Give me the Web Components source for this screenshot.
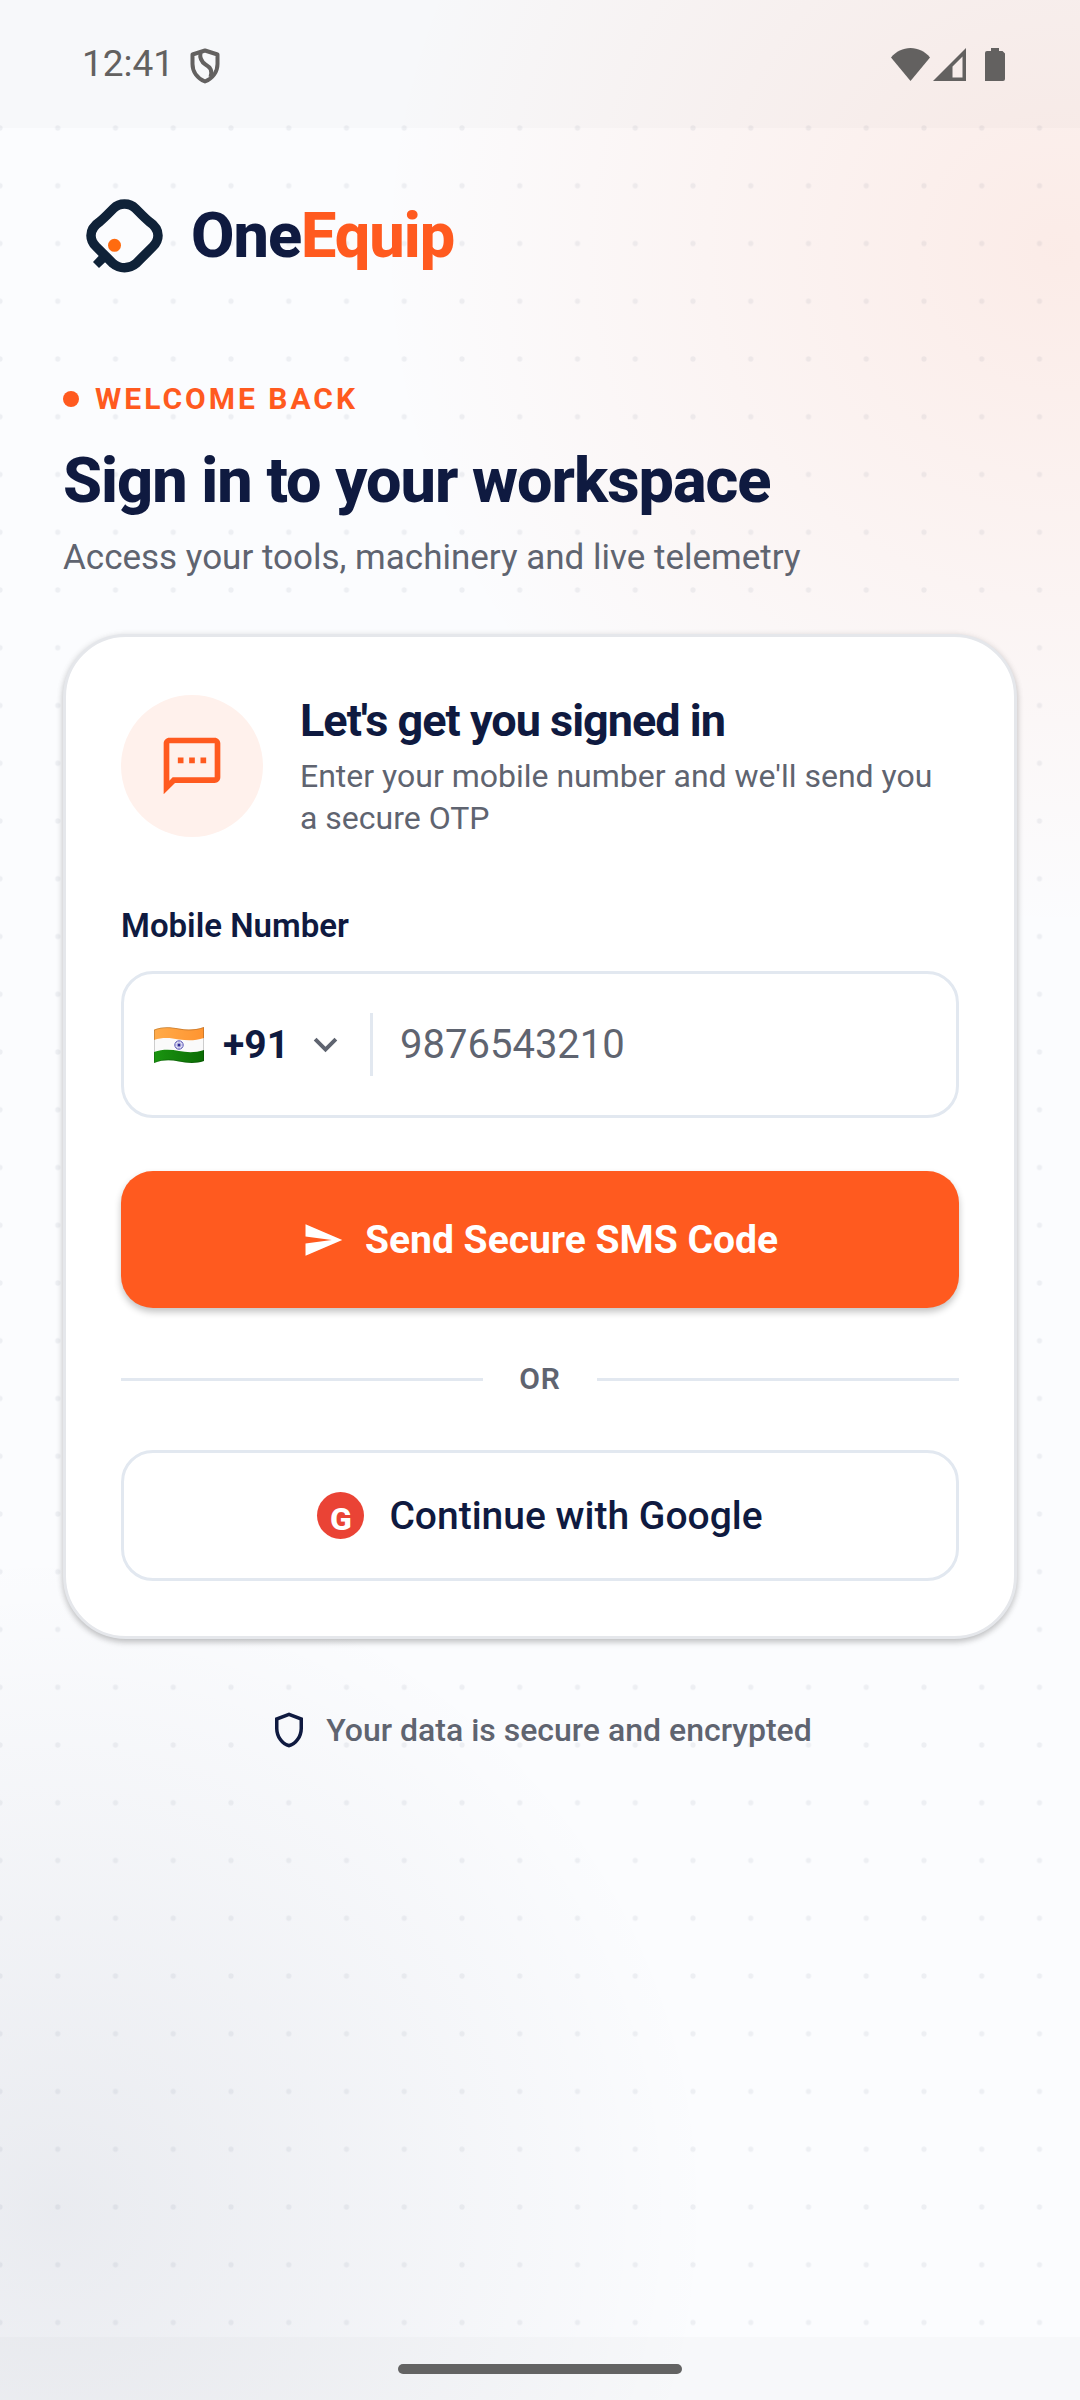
<!DOCTYPE html>
<html lang="en">
<head>
<meta charset="utf-8">
<meta name="viewport" content="width=device-width, initial-scale=1">
<title>OneEquip - Sign in</title>
<style>
    body{
        margin: 0;
        font-family: Roboto, "Noto Sans", sans-serif;
        color: #0f1a40;
        --navy: #0f1a40;
        --orange: #ff5a1f;
        --grey: #5f6470;
        --line: #e2e8f0;
        --radius: 32px;
    }
</style>
</head>
<body>
<app-screen>
    <status-bar slot="top" time="12:41"></status-bar>
    <brand-logo></brand-logo>
    <page-heading eyebrow="WELCOME BACK">
        Sign in to your workspace
        <span slot="subtitle">Access your tools, machinery and live telemetry</span>
    </page-heading>
    <sign-in-card>
        <card-header slot="header">
            Let's get you signed in
            <span slot="text">Enter your mobile number and we'll send you a secure OTP</span>
        </card-header>
        <phone-field label="Mobile Number" placeholder="9876543210"></phone-field>
        <send-button>Send Secure SMS Code</send-button>
        <or-divider>OR</or-divider>
        <google-button>Continue with Google</google-button>
    </sign-in-card>
    <secure-note>Your data is secure and encrypted</secure-note>
    <nav-bar slot="bottom"></nav-bar>
</app-screen>

<script>
//Base class : puts the style and the markup in the shadow root
class BaseElement extends HTMLElement{
    html = ``
    css = ``

    constructor() {
        super();
        this.attachShadow({ mode: "open" });
    }

    connectedCallback() {
        this.shadowRoot.innerHTML = `<style>*{box-sizing:border-box} ${this.css}</style>` + this.html;
        this.ready();
    }

    ready() {}
}

//Full page : glows, dot grid, system bars and content
class AppScreen extends BaseElement{
    html = `<svg class="dots" aria-hidden="true">
                <defs>
                    <pattern id="dot" x="-11" y="-11" width="22" height="22" patternUnits="userSpaceOnUse" patternTransform="scale(2.625)">
                        <circle cx="11" cy="11" r="1" fill="#0f1a40" fill-opacity=".06"/>
                    </pattern>
                </defs>
                <rect y="-6" width="100%" height="100%" fill="url(#dot)"/>
            </svg>
            <slot name="top"></slot>
            <main><slot></slot></main>
            <slot name="bottom"></slot>`

    css = `
    :host{
        display: flex;
        flex-direction: column;
        min-height: 100vh;
        position: relative;
        overflow: hidden;
        background:
            radial-gradient(circle 680px at 98% 250px, rgba(255, 90, 31, .1), rgba(255, 90, 31, 0)),
            radial-gradient(circle 660px at 5% calc(100% - 190px), rgba(15, 26, 64, .075), rgba(15, 26, 64, 0)),
            #fbfcfe;
    }
    .dots{
        position: absolute;
        top: 128px;
        left: 0;
        width: 100%;
        height: calc(100% - 191px);
        overflow: visible;
    }
    main{
        flex: 1;
        position: relative;
        display: flex;
        flex-direction: column;
        padding: 68px 63px;
    }`
}

class StatusBar extends BaseElement{
    html = `<span class="time"></span>
            <svg class="shield" width="30" height="36" viewBox="0 0 30 36" fill="none" stroke="currentColor" stroke-width="4" stroke-linejoin="round">
                <path d="M15 2.500L27.500 6.500V16C27.500 24 22.500 30.500 15 33.500C7.500 30.500 2.500 24 2.500 16V6.500Z"/>
                <path d="M10.500 4.500C9.500 10 11 13.500 15.500 16.500C20.500 19.500 22.500 22 20.500 29"/>
            </svg>
            <span class="icons">
                <svg width="39" height="33" viewBox="0 0 39 33" fill="currentColor"><path d="M0 9.500C5 3.500 12 0 19.500 0S34 3.500 39 9.500L19.500 33Z"/></svg>
                <svg width="33" height="33" viewBox="0 0 33 33" fill="currentColor"><path fill-rule="evenodd" d="M33 0V33H0ZM29.500 8.500L19.500 18.500V29.500H29.500Z"/></svg>
                <svg class="battery" width="20" height="33" viewBox="0 0 20 33" fill="currentColor"><path d="M6 0H14V3H17.500L20 5.500V31Q20 33 18 33H0V5Q0 3 2 3H6Z"/></svg>
            </span>`

    css = `
    :host{
        display: flex;
        align-items: center;
        height: 128px;
        padding: 0 75px 0 82px;
        background: rgba(0, 0, 0, .014);
        color: #636160;
        font-size: 37px;
        line-height: 42px;
    }
    .icons{
        display: flex;
        align-items: center;
        gap: 3px;
        margin-left: auto;
    }
    svg{
        display: block;
    }
    .shield{
        margin: 3px 0 0 16px;
    }
    .battery{
        margin-left: 16px;
    }`

    ready() {
        this.shadowRoot.querySelector(".time").textContent = this.getAttribute("time");
    }
}

class BrandLogo extends BaseElement{
    html = `<svg width="80" height="80" viewBox="84 196 80 80" aria-hidden="true">
                <path d="M124.500 204C129 204 132.500 205.500 135.500 208.500L142 215Q145 218 149 221.500C155 225.500 158 230 158 235.500C158 240 156 243.500 153 246.500L136 263.500C129.500 269.200 119.500 269.200 113 263.500L96 246.500C93 243.500 91 240 91 235.500C91 230 94 225.500 100 221.500Q104 218 107 215L113.500 208.500C116.500 205.500 120 204 124.500 204Z" fill="none" stroke="#0f2238" stroke-width="9.500"/>
                <path d="M100 254.500L93 262L99 268L107 260.500Z" fill="#0f2238"/>
                <circle cx="114.500" cy="245.300" r="6.500" fill="#ff6b0f"/>
            </svg>
            <span>One<b>Equip</b></span>`

    css = `
    :host{
        display: flex;
        align-items: center;
        gap: 27px;
        padding-left: 21px;
        font-size: 63px;
        line-height: 74px;
        font-weight: 800;
        letter-spacing: -1px;
    }
    b{
        font-weight: inherit;
        color: var(--orange);
    }`
}

class PageHeading extends BaseElement{
    html = `<p class="eyebrow"></p>
            <h1><slot></slot></h1>
            <p class="subtitle"><slot name="subtitle"></slot></p>`

    css = `
    :host{
        display: block;
        margin-top: 102px;
    }
    p, h1{
        margin: 0;
    }
    .eyebrow{
        display: flex;
        align-items: center;
        gap: 16px;
        font-size: 30px;
        line-height: 42px;
        font-weight: 700;
        letter-spacing: 3px;
        color: var(--orange);
    }
    .eyebrow::before{
        content: '';
        width: 16px;
        height: 16px;
        border-radius: 50%;
        background: currentColor;
    }
    h1{
        margin-top: 24px;
        font-size: 63px;
        line-height: 74px;
        font-weight: 800;
        letter-spacing: -1px;
    }
    .subtitle{
        margin-top: 19px;
        font-size: 35px;
        line-height: 42px;
        color: var(--grey);
    }`

    ready() {
        this.shadowRoot.querySelector(".eyebrow").textContent = this.getAttribute("eyebrow");
    }
}

class SignInCard extends BaseElement{
    html = `<slot name="header"></slot><form><slot></slot></form>`

    css = `
    :host{
        display: block;
        margin-top: 55px;
        padding: 55px;
        background: #fff;
        border: 3px solid #e5e7eb;
        border-radius: 63px;
        box-shadow: 0 3px 6px rgba(0, 0, 0, .22), 0 1px 9px rgba(0, 0, 0, .06);
    }
    form{
        display: flex;
        flex-direction: column;
        margin-top: 66px;
    }`
}

class CardHeader extends BaseElement{
    html = `<div class="icon">
                <svg width="68" height="68" viewBox="0 0 24 24" fill="currentColor" aria-hidden="true"><path d="M20 2H4c-1.100 0-2 .9-2 2v18l4-4h14c1.100 0 2-.9 2-2V4c0-1.100-.9-2-2-2zm0 14H5.170L4 17.170V4h16v12zM7 9h2v2H7V9zm4 0h2v2h-2V9zm4 0h2v2h-2V9z"/></svg>
            </div>
            <div>
                <h2><slot></slot></h2>
                <p><slot name="text"></slot></p>
            </div>`

    css = `
    :host{
        display: flex;
        align-items: center;
        gap: 37px;
        padding-right: 10px;
    }
    .icon{
        flex: none;
        display: flex;
        align-items: center;
        justify-content: center;
        width: 142px;
        height: 142px;
        border-radius: 50%;
        background: #fff1ec;
        color: var(--orange);
    }
    h2{
        margin: 0;
        font-size: 45px;
        line-height: 58px;
        font-weight: 700;
        letter-spacing: -1px;
    }
    p{
        margin: 5px 0 0;
        font-size: 32px;
        line-height: 42px;
        color: var(--grey);
    }`
}

class PhoneField extends BaseElement{
    html = `<label for="phone"></label>
            <div class="box">
                <svg width="50" height="36" viewBox="0 0 50 36" aria-hidden="true">
                    <defs>
                        <clipPath id="cloth"><path d="M0 2.500C9 -1 17 0 25 1.500C33 3 41 3 50 0V34C41 37 33 36 25 34.500C17 33 9 32.500 0 36Z"/></clipPath>
                        <linearGradient id="saffron"><stop stop-color="#ffab4a"/><stop offset="1" stop-color="#ff9430"/></linearGradient>
                        <linearGradient id="green"><stop stop-color="#1a9510"/><stop offset="1" stop-color="#0b6c05"/></linearGradient>
                    </defs>
                    <g clip-path="url(#cloth)">
                        <rect width="50" height="36" fill="#fafafa"/>
                        <path d="M0 -4H50V11C41 14 33 13.500 25 12.500C17 11 9 10 0 13Z" fill="url(#saffron)"/>
                        <path d="M0 25C9 22 17 22.500 25 24C33 25.500 41 26 50 23V40H0Z" fill="url(#green)"/>
                        <circle cx="25" cy="18" r="4.200" fill="#e4e4f5" stroke="#5a55b5"/>
                        <path d="M25 14V22M21 18H29M22.200 15.200L27.800 20.800M27.800 15.200L22.200 20.800" stroke="#8a87cc" stroke-width=".5"/>
                        <circle cx="25" cy="18" r="1.500" fill="#2f2a94"/>
                    </g>
                    <path d="M.5 3C9 -.5 17 .5 25 2C33 3.500 41 3.500 49.500 .5V33.500C41 36.500 33 35.500 25 34C17 32.500 9 32 .5 35.500Z" fill="none" stroke="#000" stroke-opacity=".18"/>
                </svg>
                <span class="code">
                    <select aria-label="Country code"><option>+91</option></select>
                    <svg width="47" height="47" viewBox="0 0 24 24" fill="currentColor" aria-hidden="true"><path d="M7.410 8.590L12 13.170l4.590-4.580L18 10l-6 6-6-6z"/></svg>
                </span>
                <input id="phone" type="tel">
            </div>`

    css = `
    label{
        display: block;
        font-size: 33px;
        line-height: 42px;
        font-weight: 600;
    }
    .box{
        display: flex;
        align-items: center;
        height: 147px;
        margin-top: 24px;
        padding: 0 30px;
        border: 3px solid var(--line);
        border-radius: var(--radius);
    }
    .code{
        display: flex;
        align-items: center;
        gap: 12px;
        height: 63px;
        margin-left: 19px;
        padding-right: 21px;
        border-right: 3px solid var(--line);
        color: var(--grey);
    }
    select{
        appearance: none;
        border: none;
        padding: 0;
        background: none;
        font: 700 39px/48px Roboto, sans-serif;
        color: var(--navy);
    }
    input{
        flex: 1;
        min-width: 0;
        border: none;
        padding: 0 0 0 27px;
        background: none;
        font: 400 40px/48px Roboto, sans-serif;
        color: var(--navy);
        outline: none;
    }
    input::placeholder{
        color: var(--grey);
        opacity: 1;
    }`

    ready() {
        this.shadowRoot.querySelector("label").textContent = this.getAttribute("label");
        this.shadowRoot.querySelector("input").placeholder = this.getAttribute("placeholder");
    }
}

class SendButton extends BaseElement{
    html = `<button type="button">
                <svg width="42" height="42" viewBox="0 0 24 24" fill="currentColor" aria-hidden="true"><path d="M2.010 21L23 12 2.010 3 2 10l15 2-15 2z"/></svg>
                <slot></slot>
            </button>`

    css = `
    :host{
        display: block;
        margin-top: 53px;
    }
    button{
        display: flex;
        align-items: center;
        justify-content: center;
        gap: 21px;
        width: 100%;
        height: 137px;
        border: none;
        border-radius: var(--radius);
        background: var(--orange);
        box-shadow: 0 4px 7px rgba(0, 0, 0, .24);
        color: #fff;
        font: 700 39px/48px Roboto, sans-serif;
    }`
}

class OrDivider extends BaseElement{
    html = `<slot></slot>`

    css = `
    :host{
        display: flex;
        align-items: center;
        gap: 36px;
        margin: 50px 0;
        font-size: 30px;
        line-height: 42px;
        font-weight: 600;
        letter-spacing: 1px;
        color: var(--grey);
    }
    :host::before,
    :host::after{
        content: '';
        flex: 1;
        height: 3px;
        background: var(--line);
    }`
}

class GoogleButton extends BaseElement{
    html = `<button type="button">
                <span class="g">G</span>
                <slot></slot>
            </button>`

    css = `
    button{
        display: flex;
        align-items: center;
        justify-content: center;
        gap: 25px;
        width: 100%;
        height: 131px;
        border: 3px solid var(--line);
        border-radius: var(--radius);
        background: #fff;
        color: var(--navy);
        font: 500 39px/48px Roboto, sans-serif;
    }
    .g{
        width: 47px;
        height: 47px;
        padding-top: 3px;
        border-radius: 50%;
        background: #ea4335;
        color: #fff;
        font-size: 32px;
        font-weight: 800;
        text-align: center;
    }`
}

class SecureNote extends BaseElement{
    html = `<svg width="42" height="42" viewBox="0 0 24 24" fill="#0f1a40" aria-hidden="true"><path d="M12 2L4 5v6.090c0 5.050 3.410 9.760 8 10.910 4.590-1.150 8-5.860 8-10.910V5l-8-3zm6 9.090c0 4-2.550 7.700-6 8.830-3.450-1.130-6-4.820-6-8.830v-4.700l6-2.250 6 2.250v4.700z"/></svg>
            <slot></slot>`

    css = `
    :host{
        display: flex;
        align-items: center;
        justify-content: center;
        gap: 16px;
        margin-top: 70px;
        font-size: 32px;
        line-height: 42px;
        font-weight: 500;
        color: var(--grey);
    }`
}

class NavBar extends BaseElement{
    html = `<div></div>`

    css = `
    :host{
        display: flex;
        align-items: center;
        justify-content: center;
        height: 63px;
        background: rgba(0, 0, 0, .014);
    }
    div{
        width: 284px;
        height: 10px;
        border-radius: 5px;
        background: #636363;
    }`
}

customElements.define("app-screen", AppScreen);
customElements.define("status-bar", StatusBar);
customElements.define("brand-logo", BrandLogo);
customElements.define("page-heading", PageHeading);
customElements.define("sign-in-card", SignInCard);
customElements.define("card-header", CardHeader);
customElements.define("phone-field", PhoneField);
customElements.define("send-button", SendButton);
customElements.define("or-divider", OrDivider);
customElements.define("google-button", GoogleButton);
customElements.define("secure-note", SecureNote);
customElements.define("nav-bar", NavBar);
</script>
</body>
</html>
